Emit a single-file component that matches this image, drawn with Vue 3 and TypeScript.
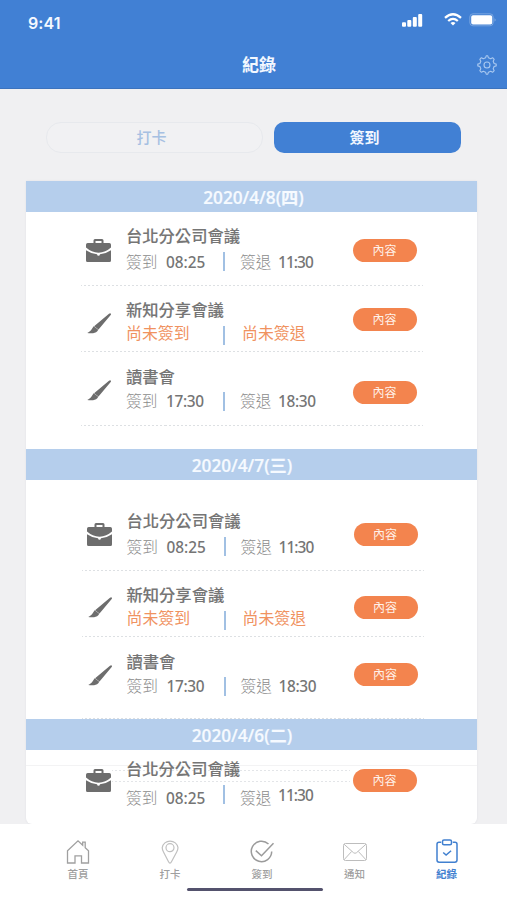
<script setup lang="ts">
interface Meeting {
  icon: 'case' | 'brush'
  title: string
  checkIn?: string
  checkOut?: string
}
interface Day {
  date: string
  weekday: string
  meetings: Meeting[]
}

const fullDay: Meeting[] = [
  { icon: 'case', title: '台北分公司會議', checkIn: '08:25', checkOut: '11:30' },
  { icon: 'brush', title: '新知分享會議' },
  { icon: 'brush', title: '讀書會', checkIn: '17:30', checkOut: '18:30' },
]

const days: Day[] = [
  { date: '2020/4/8', weekday: '四', meetings: fullDay },
  { date: '2020/4/7', weekday: '三', meetings: fullDay },
  { date: '2020/4/6', weekday: '二', meetings: fullDay.slice(0, 1) },
]

function tightness(time: string): string {
  const ones = time.split('1').length - 1
  return ones > 0 ? `ones-${ones}` : ''
}
</script>

<template>
  <div class="screen">
    <header class="top">
      <div class="status">
        <span class="clock">9:41</span>
        <div class="signals">
          <svg class="cell" width="21" height="13" viewBox="0 0 21 13" fill="#fff">
            <rect x="0" y="8.3" width="4" height="4.5" rx="1" />
            <rect x="5.3" y="6" width="4" height="6.8" rx="1" />
            <rect x="10.8" y="3" width="4" height="9.8" rx="1" />
            <rect x="16.2" y="0" width="4" height="12.8" rx="1" />
          </svg>
          <svg class="wifi" width="18" height="13" viewBox="0 0 18 13" fill="none" stroke="#fff" stroke-width="2.3">
            <path d="M1 4.8Q9-2.3 17 4.8" />
            <path d="M4.2 8Q9 3.8 13.8 8" />
            <path d="M6.5 10.1Q9 8 11.5 10.1L9 12.6Z" fill="#fff" stroke="none" />
          </svg>
          <svg class="battery" width="28" height="14" viewBox="0 0 28 14">
            <rect x=".8" y=".8" width="23.4" height="12" rx="3.2" fill="none" stroke="#fff" stroke-opacity=".28" />
            <rect x="2.2" y="2.3" width="21" height="9.2" rx="1.8" fill="#fff" />
            <path d="M25.7 4.9Q27.4 6.8 25.7 8.8Z" fill="#fff" fill-opacity=".5" />
          </svg>
        </div>
      </div>
      <div class="titlebar">
        <h1>紀錄</h1>
        <svg class="gear" width="20" height="20" viewBox="0 0 20 20" fill="none" stroke="#a9c8f0" stroke-width="1.1" stroke-linejoin="round">
          <path d="M8.6 2.8 9.2.8h1.6l.6 2 2.3.9 1.9-1 1.600 1.600-1 1.900.9 2.300 2.100.6v1.800l-2.100.6-.9 2.300 1 1.900-1.600 1.600-1.900-1-2.300.9-.6 2H9.200l-.6-2-2.300-.9-1.900 1-1.600-1.600 1-1.900-.9-2.300-2.100-.6V9.100l2.100-.6.9-2.300-1-1.900 1.600-1.600 1.900 1Z" />
          <circle cx="10" cy="10" r="3" />
        </svg>
      </div>
    </header>

    <div class="tabs">
      <button class="tab">打卡</button>
      <button class="tab active">簽到</button>
    </div>

    <main class="card">
      <section v-for="day in days" :key="day.date" class="day">
        <h2>{{ day.date }}({{ day.weekday }})</h2>
        <div class="rows">
          <article v-for="m in day.meetings" :key="m.title" class="row">
            <svg v-if="m.icon === 'case'" class="icon" width="25" height="23" viewBox="0 0 25 23" fill="#6d6d6d">
              <path fill-rule="evenodd" d="M7.500 4V1.500Q7.500 0 9 0h7Q17.500 0 17.500 1.500V4h5.800Q25 4 25 5.700V8.500Q19.500 13.400 12.500 13.700 5.500 13.400 0 8.500V5.700Q0 4 1.700 4ZM9.500 1.900V4h6V1.900Z" />
              <path d="M0 11.200Q5 14.600 11 15.300q.3 1.500 1.500 1.500t1.500-1.500q6-.7 11-4.100V21.500Q25 23 23.500 23h-22Q0 23 0 21.500Z" />
            </svg>
            <svg v-else class="icon brush" width="25" height="21" viewBox="0 0 25 21" fill="#6d6d6d">
              <path d="M24.600.4Q25.300 1 24.700 2L12.500 16.500 8.100 13.200 23 .7Q24-.1 24.600.4ZM7.600 13.300l4.700 3.500q-1.800 3.200-5.200 3.400-3.800.2-5.800-.2 3.300-1.300 6.300-6.700Z" />
            </svg>
            <div class="info">
              <h3>{{ m.title }}</h3>
              <div class="times">
                <div v-if="m.checkIn" class="time"><span>簽到</span><b :class="tightness(m.checkIn)">{{ m.checkIn }}</b></div>
                <div v-else class="time missing">尚未簽到</div>
                <i class="divider"></i>
                <div v-if="m.checkOut" class="time out"><span>簽退</span><b :class="tightness(m.checkOut)">{{ m.checkOut }}</b></div>
                <div v-else class="time out missing">尚未簽退</div>
              </div>
            </div>
            <button class="pill">內容</button>
          </article>
        </div>
      </section>
    </main>

    <nav class="nav">
      <a class="item">
        <svg width="26" height="26" viewBox="0 0 26 26" fill="none" stroke="#a0a0a0" stroke-width="1.3">
          <path d="M2.500 11.800 13 1.800l4.700 4.500V3.200h2.500V8.700l3.300 3.100V24h-7v-7.200H10V24H2.500Z" />
        </svg>
        <span>首頁</span>
      </a>
      <a class="item">
        <svg width="26" height="26" viewBox="0 0 26 26" fill="none" stroke="#c0c0c0" stroke-width="1.2">
          <path d="M13 24.200Q12.200 24.200 11.400 22.500L6.500 13Q5.200 10.700 5.200 8.600A8 7.800 0 0 1 21 8.600Q21 10.700 19.700 13L14.600 22.500Q13.800 24.200 13 24.200Z" />
          <circle cx="13" cy="8.700" r="4" />
        </svg>
        <span>打卡</span>
      </a>
      <a class="item">
        <svg width="26" height="26" viewBox="0 0 26 26" fill="none" stroke="#9b9b9b" stroke-width="1.500">
          <path d="M19.500 5A10.200 10.200 0 1 0 22.700 12.600" />
          <path d="m6.800 11.600 5.700 5.200L24.500 4.300" />
        </svg>
        <span>簽到</span>
      </a>
      <a class="item">
        <svg width="26" height="26" viewBox="0 0 26 26" fill="none" stroke="#bdbdbd" stroke-width="1">
          <rect x="1.500" y="4.500" width="23" height="17" rx="2" />
          <path d="m2 5.200 9.500 8.500q1.500 1.200 3 0L24 5.200M2 20.800l7.600-8.300M24 20.800l-7.600-8.300" />
        </svg>
        <span>通知</span>
      </a>
      <a class="item current">
        <svg width="26" height="26" viewBox="0 0 26 26" fill="none" stroke="#4180d0" stroke-width="1.500">
          <path d="M7.200 3.200H5Q3 3.200 3 5.200V21q0 2.200 2.200 2.200h15.600Q23 23.200 23 21V5.200q0-2-2-2h-2.200" />
          <rect x="8.500" y="1" width="9" height="4.800" rx="1.500" />
          <path d="m9.200 13.500 2.900 2.600 5-4.400" />
        </svg>
        <span>紀錄</span>
      </a>
      <div class="indicator"></div>
    </nav>
  </div>
</template>

<style>
body { margin: 0; background: #f0f0f2; }
</style>

<style scoped>
* { box-sizing: border-box; }
h1, h2, h3 { margin: 0; }
button { padding: 0; border: 0; font-family: inherit; white-space: nowrap; }
.screen {
  display: flex;
  flex-direction: column;
  width: 507px;
  height: 900px;
  overflow: hidden;
  background: #f0f0f2;
  font-family: "Open Sans", "Noto Sans CJK TC", sans-serif;
  color: #757575;
}
.top { height: 89px; background: #4180d4; border-bottom: 1px solid #3c73bd; flex: none; }
.status { display: flex; justify-content: space-between; height: 44px; padding: 13px 11px 0 28px; }
.clock { font: 600 16px/20px Inter, sans-serif; color: #f4f8ff; letter-spacing: .1px; }
.signals { display: flex; }
.cell { margin-top: 1px; margin-right: 21px; }
.wifi { margin-right: 7px; }
.battery { margin-right: -1px; }
.titlebar { display: grid; grid-template-columns: 1fr auto 1fr; height: 40px; align-items: center; }
h1 { grid-column: 2; font-size: 17px; line-height: 24px; font-weight: 700; color: #f3f8ff; padding: 2px 0 0 11px; }
.gear { justify-self: end; margin-right: 10px; margin-top: 2px; }
.tabs { display: flex; gap: 11px; padding: 33px 46px 28px; flex: none; }
.tab { width: 217px; height: 31px; border: 1px solid #e7e9ed; border-radius: 15px; background: #f1f1f3; color: #a6c0e2; font-size: 15px; line-height: 27px; padding: 0 6px 0 0; font-weight: 500; }
.tab.active { width: 187px; border: 0; border-radius: 10px; background: #4180d4; color: #f2f7ff; font-weight: 700; }
.card { width: 451px; height: 643px; margin-left: 26px; flex: none; background: #fff; border-radius: 2px 2px 6px 6px; box-shadow: 0 0 2px #dcdde2; }
h2 { height: 31px; font-size: 17.200px; line-height: 31px; font-weight: 600; text-align: center; color: #f6faff; background: #b5ceec; padding: 1px 0 0 4px; -webkit-text-stroke: .2px #f6faff; }
.day:nth-child(2) h2, .day:nth-child(3) h2 { padding: 1px 19px 0 0; }
.rows { padding: 0 54px 0 55px; }
.row { display: grid; grid-template-columns: 45px 227px 64px; height: var(--h); align-items: start; border: solid; border-image: repeating-linear-gradient(90deg, #dde0e3 0 2px, #fff 2px 4px) 1; border-width: 0 0 1px; }
.icon { margin: var(--icon) 0 0 5px; }
.info { padding-top: var(--title); }
h3 { font-size: 16.300px; line-height: 20px; font-weight: 500; height: 20px; white-space: nowrap; -webkit-text-stroke: .1px #757575; }
.times { display: grid; grid-template-columns: 97px 2px 1fr; height: 20px; margin-top: var(--gap); }
.time { display: flex; line-height: 20px; height: 20px; font-size: 15.700px; white-space: nowrap; color: #8b8b8b; }
.time span { width: 40px; font-weight: 300; }
.time b { font: 500 15.400px/20px "Noto Sans", "Open Sans", sans-serif; color: #757575; padding-top: 1px; }
.time b.ones-1 { letter-spacing: -.35px; }
.time b.ones-2 { letter-spacing: -.9px; }
.time.out { padding-left: 15px; }
.time.out span { width: 38px; }
.time.missing { font-size: 15.900px; color: #f0925f; }
.time.out.missing { padding-left: 17px; }
.divider { height: 19px; background: #a1c0e3; margin-top: var(--shift, 0); }
.pill { width: 64px; height: 23px; margin-top: var(--pill); border-radius: 12px; background: #f3844e; color: #fff1e9; font-size: 12px; line-height: 22px; padding-right: 1px; }

.row:nth-child(1) { --h: 74px; --title: 14px; --gap: 6px; --icon: 27px; --pill: 27px; }
.row:nth-child(2) { --h: 66px; --title: 14px; --gap: 3px; --icon: 27px; --pill: 22px; --shift: 3px; }
.row:nth-child(3) { --h: 74px; --title: 15px; --gap: 4px; --icon: 28px; --pill: 29px; --shift: 1px; }
.day:nth-child(1) .rows { height: 237px; }
.day:nth-child(2) .rows { padding-left: 55.500px; padding-right: 53.500px; }
.day:nth-child(2) .row:nth-child(1) { --h: 91px; --title: 31px; --icon: 43px; --pill: 43px; }
.day:nth-child(2) .row:nth-child(2) { --icon: 26px; --pill: 25px; }
.day:nth-child(2) .row:nth-child(3) { --h: 82px; --pill: 26px; }
.day:nth-child(3) .row { --h: 74px; --title: 9px; --gap: 9px; --icon: 19px; --pill: 19px; --shift: -3px; border: 0; position: relative; z-index: 1; }
.day:nth-child(3) .time.out b { margin-top: -3px; }
.day:nth-child(3) .rows { position: relative; }
.day:nth-child(3) .rows::before { content: ""; position: absolute; left: 0; right: 0; top: 15px; height: 1px; background: #f3f3f4; }
.day:nth-child(3) .rows::after { content: ""; position: absolute; left: 86px; width: 238px; top: 20px; height: 10px; border: solid; border-width: 1px 0; border-image: repeating-linear-gradient(90deg, #e3e5e8 0 2px, #fff 2px 4px) 1; }

.nav { position: relative; display: grid; grid-template-columns: 92px 92px 92px 93px 91px; height: 76px; padding: 15px 0 0 32px; background: #fff; flex: none; }
.item { display: flex; flex-direction: column; align-items: center; color: #9f9f9f; font-size: 10.500px; line-height: 14px; font-weight: 500; gap: 2px; }
.item.current { color: #4180d0; font-weight: 700; }
.indicator { position: absolute; left: 187px; top: 64px; width: 136px; height: 3px; border-radius: 2px; background: #54526d; }
</style>
